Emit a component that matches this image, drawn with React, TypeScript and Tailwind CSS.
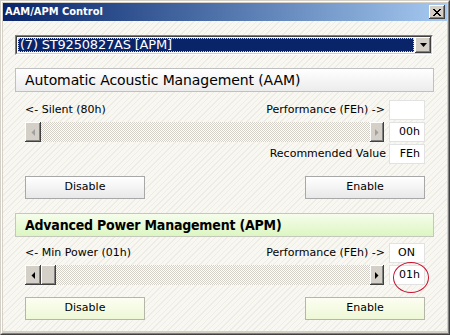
import React from "react";

const raised =
  "shadow-[inset_-1px_-1px_#404040,inset_1px_1px_#ffffff,inset_-2px_-2px_#808080,inset_2px_2px_#d4d0c8]";

function ArrowLeft({ color }: { color: string }) {
  return (
    <svg width="4" height="7" viewBox="0 0 4 7">
      <polygon points="4,0 4,7 0.5,3.5" fill={color} />
    </svg>
  );
}
function ArrowRight({ color }: { color: string }) {
  return (
    <svg width="4" height="7" viewBox="0 0 4 7">
      <polygon points="0,0 0,7 3.5,3.5" fill={color} />
    </svg>
  );
}

function ScrollBar({ enabled }: { enabled: boolean }) {
  const c = enabled ? "#000000" : "#a0a0a0";
  return (
    <div className="flex h-[20px] w-[359px]">
      <div className={`flex h-full w-[16px] items-center justify-center bg-[#d4d0c8] ${raised}`}>
        <ArrowLeft color={c} />
      </div>
      {enabled && <div className={`h-full w-[15px] bg-[#d4d0c8] ${raised}`} />}
      <div className="h-full flex-1 bg-[repeating-conic-gradient(#d4d0c8_0_25%,#ffffff_0_50%)] bg-[length:2px_2px]" />
      <div className={`flex h-full w-[14px] items-center justify-center bg-[#d4d0c8] ${raised}`}>
        <ArrowRight color={c} />
      </div>
    </div>
  );
}

function ValueBox({ text, pr = "pr-[4px]" }: { text?: string; pr?: string }) {
  return (
    <div className={`flex h-[20px] w-[36px] items-center justify-end border border-[#e2e2e2] bg-white ${pr}`}>
      {text}
    </div>
  );
}

function Btn({ label, green }: { label: string; green?: boolean }) {
  return (
    <div
      className={`flex h-[23px] w-[120px] items-center justify-center border ${
        green
          ? "border-[#b4b6a8] bg-gradient-to-b from-[#fcfef2] to-[#eef8d6]"
          : "border-[#a8a8a8] bg-gradient-to-b from-[#ffffff] to-[#e8e8e8]"
      }`}
    >
      {label}
    </div>
  );
}

export default function App() {
  return (
    <div className="h-[335px] w-[450px] border border-t-[#d4d0c8] border-l-[#d4d0c8] border-b-[#404040] border-r-[#404040] font-['DejaVu_Sans',sans-serif] text-[11px] text-black">
      <div className="h-full w-full border border-t-white border-l-white border-b-[#808080] border-r-[#808080] bg-[#d4d0c8] p-px">
        {/* Title bar */}
        <div className="flex h-[18px] items-center justify-between bg-gradient-to-r from-[#0a246a] to-[#a6caf0] pl-[2px] pr-[2px]">
          <span className="font-['DejaVu_Sans_Condensed','DejaVu_Sans',sans-serif] text-[11px] font-bold text-white">
            AAM/APM Control
          </span>
          <div className={`flex h-[14px] w-[16px] items-center justify-center bg-[#d4d0c8] ${raised}`}>
            <svg width="8" height="7" viewBox="0 0 8 7">
              <path d="M0 0h2v1h1v1h2v-1h1v-1h2v1h-1v1h-1v1h-1v1h1v1h1v1h1v1h-2v-1h-1v-1h-2v1h-1v1h-2v-1h1v-1h1v-1h1v-1h-1v-1h-1v-1h-1z" fill="#000" />
            </svg>
          </div>
        </div>
        {/* Client */}
        <div className="h-[310px] bg-[repeating-linear-gradient(135deg,#f8f7f2_0px,#f8f7f2_3px,#edece5_3px,#edece5_4px)] pl-[12px] pt-[14px]">
          {/* Dropdown */}
          <div className="flex h-[20px] w-[418px] border border-t-[#808080] border-l-[#808080] border-b-white border-r-white">
            <div className="flex flex-1 border border-t-[#404040] border-l-[#404040] border-b-[#d4d0c8] border-r-[#d4d0c8] bg-white">
              <div className="m-px flex flex-1 items-center border border-dotted border-[#c8c8ff] bg-[#0a246a] pl-[1px] text-[13px] tracking-[-0.2px] text-white">
                (7) ST9250827AS [APM]
              </div>
              <div className={`flex w-[16px] items-center justify-center bg-[#d4d0c8] ${raised}`}>
                <svg width="7" height="4" viewBox="0 0 7 4">
                  <polygon points="0,0 7,0 3.5,4" fill="#000" />
                </svg>
              </div>
            </div>
          </div>

          {/* AAM header */}
          <div className="mt-[13px] flex h-[24px] w-[419px] items-center border border-[#c0c0c0] bg-gradient-to-b from-[#ffffff] to-[#ececec] pl-[9px] text-[14px] tracking-[-0.1px]">
            Automatic Acoustic Management (AAM)
          </div>

          <div className="ml-[10px] w-[400px]">
            <div className="mt-[8px] flex h-[20px] items-center justify-between">
              <span>&lt;- Silent (80h)</span>
              <div className="flex items-center gap-[4px]">
                <span>Performance (FEh) -&gt;</span>
                <ValueBox />
              </div>
            </div>
            <div className="mt-[2px] flex h-[20px] items-center justify-between">
              <ScrollBar enabled={false} />
              <ValueBox text="00h" />
            </div>
            <div className="mt-[2px] flex h-[20px] items-center justify-end gap-[3px]">
              <span>Recommended Value</span>
              <ValueBox text="FEh" />
            </div>
            <div className="mt-[12px] flex justify-between">
              <Btn label="Disable" />
              <Btn label="Enable" />
            </div>
          </div>

          {/* APM header */}
          <div className="mt-[14px] flex h-[24px] w-[419px] items-center border border-[#c4c8bc] bg-gradient-to-b from-[#f6fdec] to-[#dcf6c0] pl-[9px] font-['DejaVu_Sans_Condensed','DejaVu_Sans',sans-serif] text-[14px] font-bold tracking-[-0.2px]">
            Advanced Power Management (APM)
          </div>

          <div className="ml-[10px] w-[400px]">
            <div className="mt-[6px] flex h-[20px] items-center justify-between">
              <span>&lt;- Min Power (01h)</span>
              <div className="flex items-center gap-[4px]">
                <span>Performance (FEh) -&gt;</span>
                <ValueBox text="ON" pr="pr-[9px]" />
              </div>
            </div>
            <div className="mt-[2px] flex h-[20px] items-center justify-between">
              <ScrollBar enabled={true} />
              <div className="relative">
                <ValueBox text="01h" />
                <div className="absolute left-[4px] top-[-3px] h-[31px] w-[36px] rounded-[50%] border border-[#c8102e]" />
              </div>
            </div>
            <div className="mt-[12px] flex justify-between">
              <Btn label="Disable" green />
              <Btn label="Enable" green />
            </div>
          </div>
        </div>
      </div>
    </div>
  );
}
